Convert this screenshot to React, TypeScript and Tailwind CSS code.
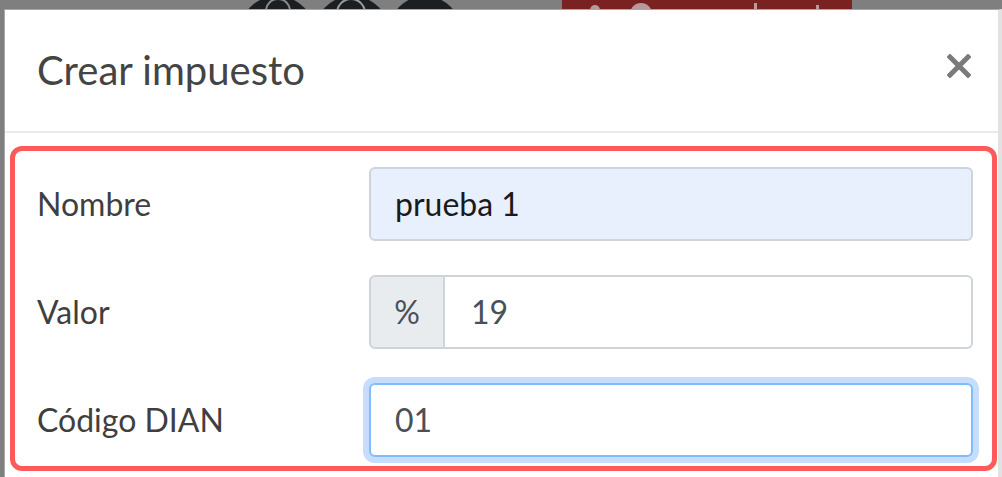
import React from "react";

function Row({ label, children }: { label: string; children: React.ReactNode }) {
  return (
    <div className="flex items-center h-[74px]">
      <div className="w-[332px] text-[32px] text-[#3f3f3f] leading-none">{label}</div>
      <div className="flex-1">{children}</div>
    </div>
  );
}

export default function App() {
  return (
    <div
      className="w-[1002px] h-[477px] bg-[#7f7f7f] overflow-hidden flex flex-col"
      style={{ fontFamily: "Lato, 'Open Sans', sans-serif" }}
    >
      {/* background page peeking at top */}
      <div className="h-[9px] shrink-0 relative overflow-hidden flex">
        <div className="ml-[239px] flex">
          <div className="w-[76px] h-[76px] rounded-full bg-[#1c1f22] -mt-[4px] relative">
            <div className="absolute left-[26px] top-[2px] w-[26px] h-[26px] rounded-full border-[2px] border-[#8a8a8a]" />
          </div>
          <div className="w-[76px] h-[76px] rounded-full bg-[#1c1f22] -mt-[4px] -ml-[1px] relative">
            <div className="absolute left-[22px] top-[2px] w-[30px] h-[30px] rounded-full border-[2px] border-[#9a9a9a]" />
          </div>
          <div className="w-[72px] h-[76px] rounded-full bg-[#1c1f22] -mt-[4px] -ml-[1px]" />
        </div>
        <div className="ml-[101px] w-[290px] h-[9px] bg-[#7a2222] relative">
          <div className="absolute left-[28px] top-[5px] w-[10px] h-[10px] rounded-full bg-[#b89a9a]" />
          <div className="absolute left-[68px] top-[3px] w-[22px] h-[22px] rounded-full bg-[#b89a9a]" />
          <div className="absolute left-[192px] top-[3px] w-[3px] h-[10px] bg-[#b89a9a]" />
          <div className="absolute left-[254px] top-[5px] w-[3px] h-[10px] bg-[#b89a9a]" />
        </div>
      </div>

      {/* modal */}
      <div className="ml-[4px] flex-1 bg-white border-l border-t border-[#a8a8a8] border-r-[4px] border-r-[#e2e2e2] flex flex-col">
        <div className="h-[123px] shrink-0 flex items-center justify-between pl-[32px] pr-[27px] border-b-[2px] border-[#e9ecef]">
          <div className="text-[40px] text-[#444] leading-none -mt-[2px]">Crear impuesto</div>
          <svg width="24" height="24" viewBox="0 0 24 24" className="mb-[10px]">
            <path d="M3 3 L21 21 M21 3 L3 21" stroke="#7a7a7a" strokeWidth="5" strokeLinecap="square" />
          </svg>
        </div>

        <div className="mt-[13px] ml-[5px] mr-[1px] border-[5px] border-[#ff5a5a] rounded-[12px] pl-[22px] pr-[19px] pt-[16px] pb-[9px] flex flex-col gap-[34px]">
          <Row label="Nombre">
            <div className="h-[74px] rounded-[6px] border-[2px] border-[#ced4da] bg-[#e8f0fe] flex items-center pl-[24px] text-[32px] text-[#1a1a1a]">
              prueba 1
            </div>
          </Row>
          <Row label="Valor">
            <div className="h-[74px] flex">
              <div className="w-[76px] rounded-l-[6px] border-[2px] border-[#ced4da] bg-[#e9ecef] flex items-center justify-center text-[32px] text-[#495057]">
                %
              </div>
              <div className="flex-1 rounded-r-[6px] border-[2px] border-l-0 border-[#ced4da] bg-white flex items-center pl-[26px] text-[32px] text-[#495057]">
                19
              </div>
            </div>
          </Row>
          <Row label="Código DIAN">
            <div className="h-[74px] rounded-[6px] border-[2px] border-[#80bdff] bg-white shadow-[0_0_0_6px_#c7ddfc] flex items-center pl-[24px] text-[32px] text-[#495057]">
              01
            </div>
          </Row>
        </div>
      </div>
    </div>
  );
}
